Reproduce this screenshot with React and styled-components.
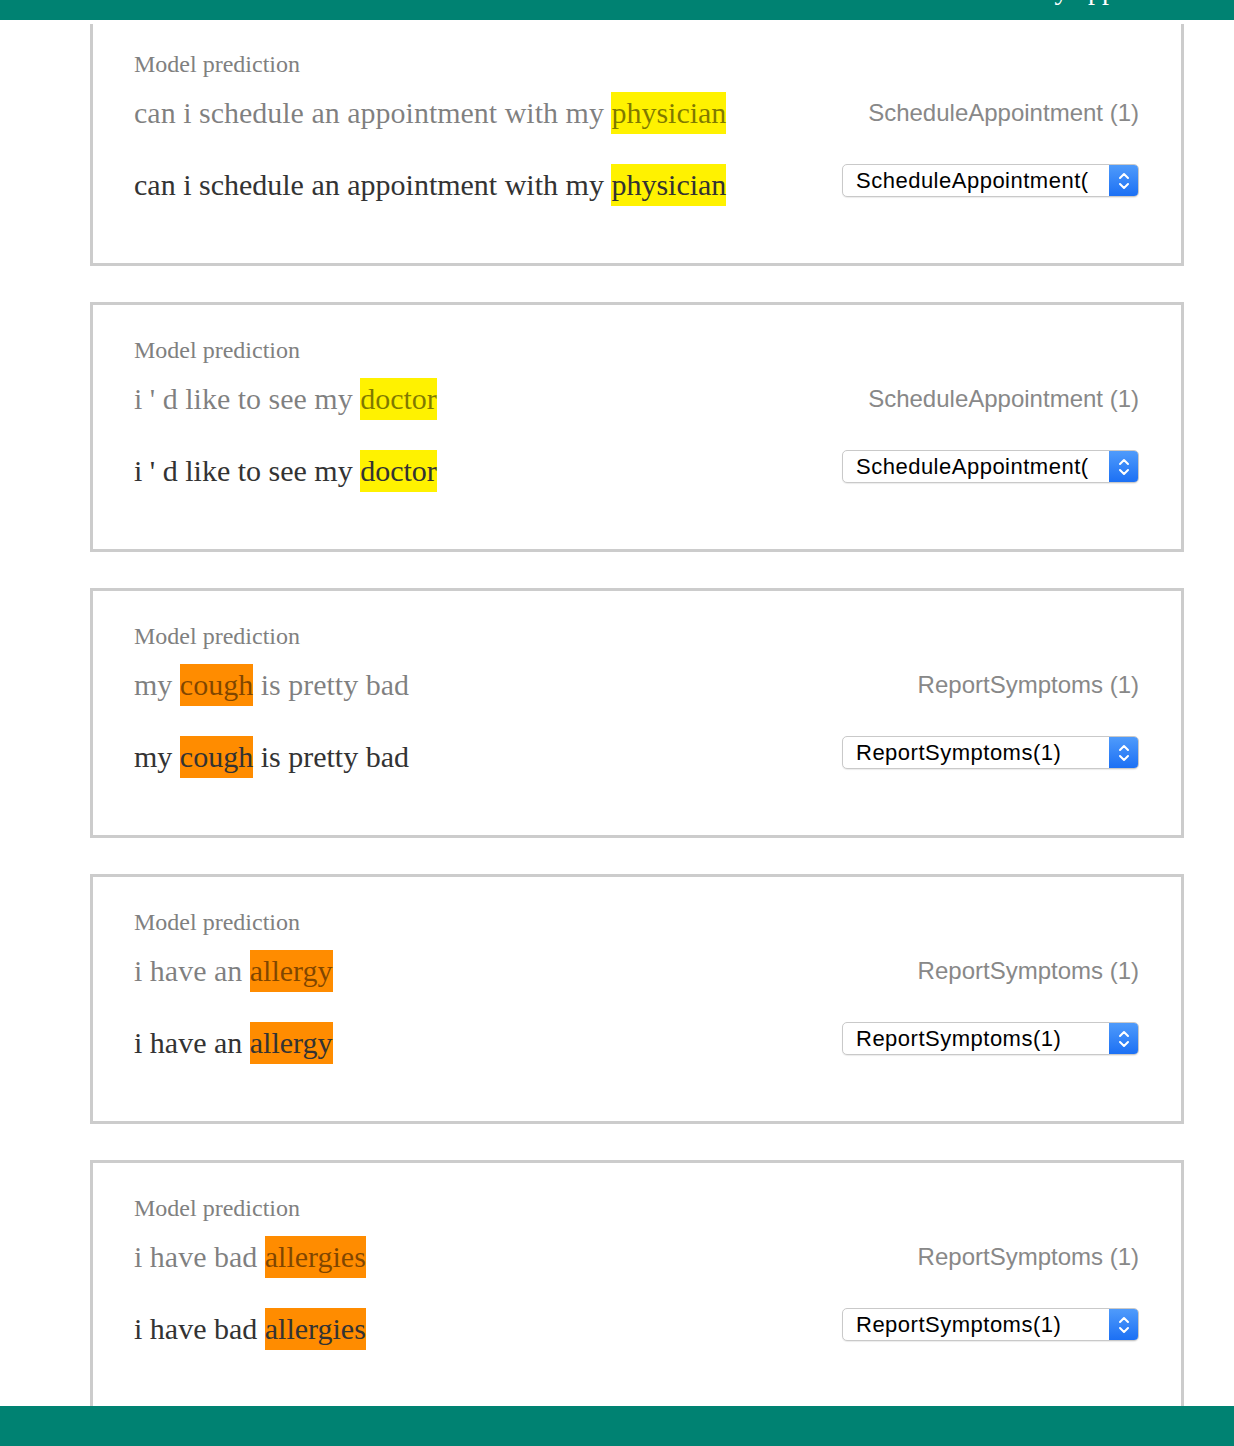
import styled, { createGlobalStyle } from "styled-components";

const GlobalStyle = createGlobalStyle`
  html, body {
    margin: 0;
    padding: 0;
    background: #fff;
    overflow: hidden;
  }
`;

const TopBar = styled.header`
  position: fixed;
  top: 0;
  left: 0;
  right: 0;
  height: 20px;
  background-color: #008272;
  border-bottom: 4px solid #fff;
  overflow: hidden;
  display: flex;
  justify-content: flex-end;
  padding-right: 118px;
  z-index: 2;
`;

const TopTitle = styled.span`
  color: #fff;
  font-family: "Liberation Serif", serif;
  font-size: 28px;
  line-height: 28px;
  margin-top: -24px;
`;

const BottomBar = styled.footer`
  position: fixed;
  left: 0;
  right: 0;
  bottom: 0;
  height: 40px;
  background-color: #008272;
  z-index: 2;
`;

const List = styled.main`
  display: flex;
  flex-direction: column;
  gap: 36px;
  padding: 16px 50px 36px 90px;
`;

const Card = styled.section`
  box-sizing: border-box;
  width: 1094px;
  height: 250px;
  border: 3px solid #cccccc;
  padding: 30px 42px 57px 41px;
  display: flex;
  flex-direction: column;
`;

const Label = styled.div`
  font-family: "Liberation Serif", "Times New Roman", serif;
  font-size: 24px;
  line-height: 30px;
  color: #808080;
  margin-bottom: 13px;
`;

const Row = styled.div`
  display: flex;
  justify-content: space-between;
  align-items: ${(p) => (p.$top ? "flex-start" : "center")};
  height: 42px;
  margin-bottom: ${(p) => (p.$gap ? "30px" : "0")};
`;

const Sentence = styled.div`
  font-family: "Liberation Serif", "Times New Roman", serif;
  font-size: 30px;
  line-height: 42px;
  color: ${(p) => (p.$muted ? "rgba(0, 0, 0, 0.5)" : "#333")};
  white-space: pre;
`;

const Mark = styled.span`
  display: inline-block;
  background-color: ${(p) => p.$bg};
  line-height: 42px;
`;

const Intent = styled.div`
  font-family: "Liberation Sans", Arial, sans-serif;
  font-size: 24px;
  color: #888;
`;

const Select = styled.div`
  box-sizing: border-box;
  width: 297px;
  height: 33px;
  display: flex;
  border: 1px solid #c9c9c9;
  border-radius: 5px;
  box-shadow: 0 1px 1px rgba(0, 0, 0, 0.08);
  background: #fff;
  overflow: hidden;
`;

const SelectText = styled.span`
  flex: 1;
  min-width: 0;
  overflow: hidden;
  white-space: nowrap;
  margin: 0 20px 0 13px;
  font-family: "Liberation Sans", Arial, sans-serif;
  font-size: 22px;
  letter-spacing: 0.5px;
  line-height: 31px;
  color: #000;
`;

const Stepper = styled.span`
  width: 29px;
  flex: none;
  display: flex;
  align-items: center;
  justify-content: center;
  background: linear-gradient(#4f9bfb, #1c70f4);
`;

const Chevrons = () => (
  <svg width="14" height="22" viewBox="0 0 14 22" fill="none" stroke="#fff" strokeWidth="2" strokeLinecap="round" strokeLinejoin="round">
    <path d="M3 8 L7 4 L11 8" />
    <path d="M3 14 L7 18 L11 14" />
  </svg>
);

const YELLOW = "#fff200";
const ORANGE = "#ff8c00";

const items = [
  { before: "can i schedule an appointment with my ", word: "physician", after: "", color: YELLOW, intent: "ScheduleAppointment (1)", choice: "ScheduleAppointment(1)" },
  { before: "i ' d like to see my ", word: "doctor", after: "", color: YELLOW, intent: "ScheduleAppointment (1)", choice: "ScheduleAppointment(1)" },
  { before: "my ", word: "cough", after: " is pretty bad", color: ORANGE, intent: "ReportSymptoms (1)", choice: "ReportSymptoms(1)" },
  { before: "i have an ", word: "allergy", after: "", color: ORANGE, intent: "ReportSymptoms (1)", choice: "ReportSymptoms(1)" },
  { before: "i have bad ", word: "allergies", after: "", color: ORANGE, intent: "ReportSymptoms (1)", choice: "ReportSymptoms(1)" },
];

function Utterance({ item, muted }) {
  return (
    <Sentence $muted={muted}>
      {item.before}
      <Mark $bg={item.color}>{item.word}</Mark>
      {item.after}
    </Sentence>
  );
}

const App = () => {
  return (
    <>
      <GlobalStyle />
      <TopBar>
        <TopTitle>Publish to my app</TopTitle>
      </TopBar>
      <List>
        {items.map((item, index) => (
          <Card key={index}>
            <Label>Model prediction</Label>
            <Row $gap>
              <Utterance item={item} muted />
              <Intent>{item.intent}</Intent>
            </Row>
            <Row $top>
              <Utterance item={item} />
              <Select>
                <SelectText>{item.choice}</SelectText>
                <Stepper>
                  <Chevrons />
                </Stepper>
              </Select>
            </Row>
          </Card>
        ))}
      </List>
      <BottomBar />
    </>
  );
};

export default App;
